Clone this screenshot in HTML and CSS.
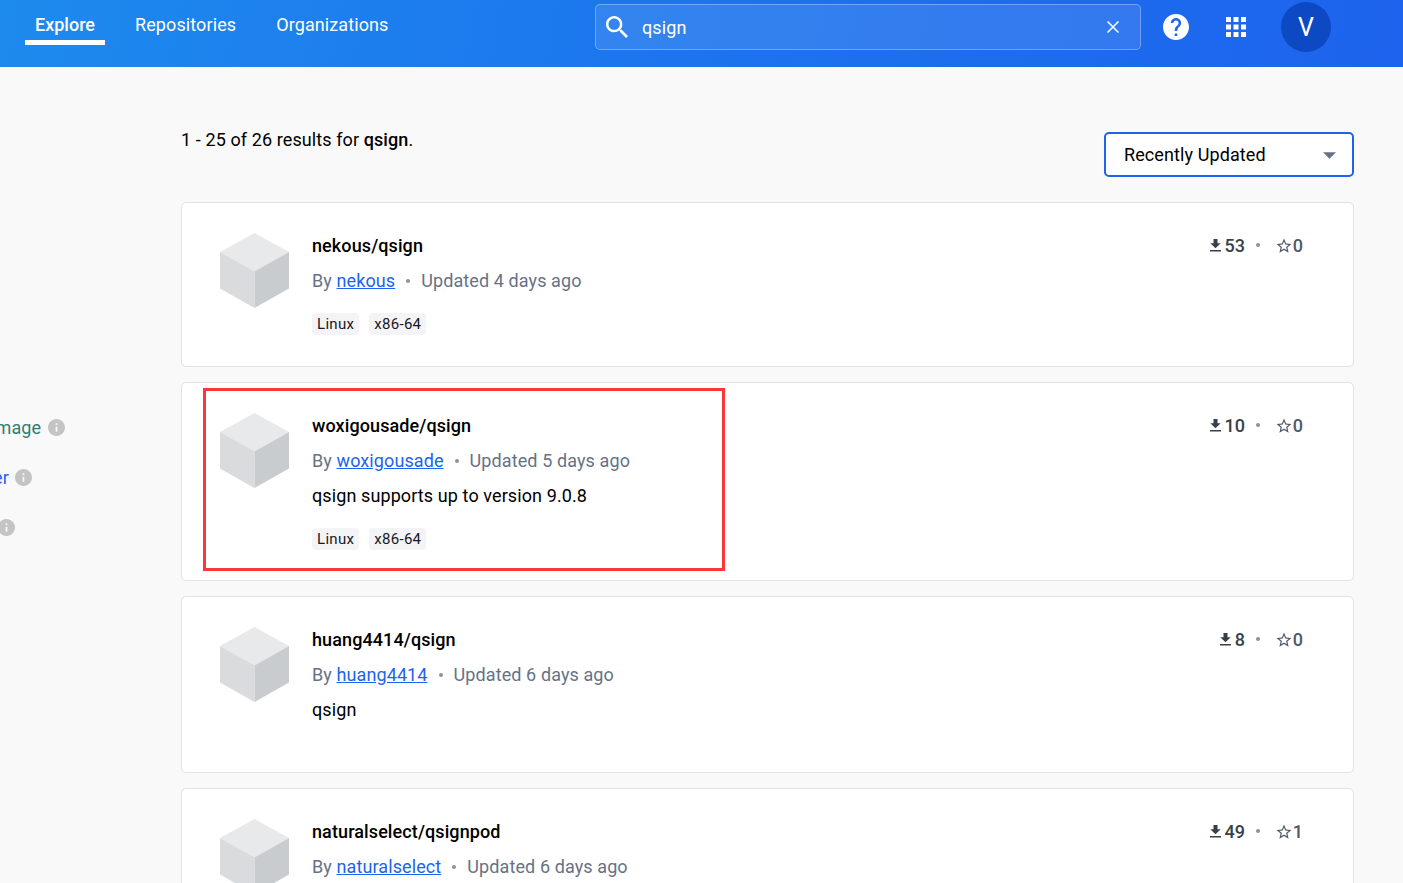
FILE: index.html
```html
<!DOCTYPE html>
<html lang="en">
<head>
<meta charset="utf-8">
<title>qsign - Explore</title>
<link rel="stylesheet" href="styles.css">
</head>
<body>
<svg width="0" height="0" class="defs">
  <symbol id="cube" viewBox="0 0 70 75" preserveAspectRatio="none"><path fill="#e8e9ea" d="M35 0 70 19 35 39 0 19z"/><path fill="#dadbdd" d="M0 19 35 38.500V75L0 55.500z"/><path fill="#c9cccf" d="M70 19 35 38.500V75L70 55.500z"/></symbol>
  <symbol id="download" viewBox="0 0 11 13"><path fill="currentColor" d="M3.500 0h4v4.200h3.200L5.500 9.200.3 4.200h3.200zM0 11h11v1.500H0z"/></symbol>
  <symbol id="star" viewBox="0 0 24 24"><path fill="currentColor" d="m22 9.240-7.190-.62L12 2 9.190 8.630 2 9.240l5.460 4.730L5.820 21 12 17.270 18.180 21l-1.630-7.030zM12 15.400l-3.760 2.270 1-4.280-3.320-2.880 4.380-.38L12 6.100l1.710 4.040 4.380.38-3.320 2.880 1 4.280z"/></symbol>
  <symbol id="info" viewBox="2 2 20 20"><path fill="currentColor" d="M12 2C6.480 2 2 6.480 2 12s4.480 10 10 10 10-4.480 10-10S17.520 2 12 2m1 15h-2v-6h2zm0-8h-2V7h2z"/></symbol>
</svg>
<header class="topbar">
  <nav class="nav">
    <a class="nav-link active">Explore</a>
    <a class="nav-link">Repositories</a>
    <a class="nav-link">Organizations</a>
  </nav>
  <div class="search">
    <svg class="search-icon" viewBox="3 3 17.500 17.500"><path fill="currentColor" d="M15.500 14h-.79l-.28-.27C15.410 12.590 16 11.110 16 9.500 16 5.910 13.090 3 9.500 3S3 5.910 3 9.500 5.910 16 9.500 16c1.610 0 3.090-.59 4.230-1.570l.27.28v.79l5 4.990L20.490 19zm-6 0C7.010 14 5 11.990 5 9.500S7.010 5 9.500 5 14 7.010 14 9.500 11.990 14 9.500 14"/></svg>
    <span class="query">qsign</span>
    <svg class="clear" viewBox="0 0 12 12"><path stroke="currentColor" stroke-width="1.500" d="M.5.5l11 11M11.500.5l-11 11"/></svg>
  </div>
  <svg class="help" viewBox="2 2 20 20"><path fill="currentColor" d="M12 2C6.480 2 2 6.480 2 12s4.480 10 10 10 10-4.480 10-10S17.520 2 12 2m1 17h-2v-2h2zm2.070-7.750-.9.920C13.450 12.900 13 13.500 13 15h-2v-.5c0-1.100.45-2.100 1.170-2.830l1.240-1.260c.37-.36.59-.86.59-1.410 0-1.100-.9-2-2-2s-2 .9-2 2H8c0-2.210 1.790-4 4-4s4 1.790 4 4c0 .88-.36 1.680-.93 2.250"/></svg>
  <svg class="apps" viewBox="4 4 16 16"><path fill="currentColor" d="M4 8h4V4H4zm6 12h4v-4h-4zm-6 0h4v-4H4zm0-6h4v-4H4zm6 0h4v-4h-4zm6-10v4h4V4zm-6 4h4V4h-4zm6 6h4v-4h-4zm0 6h4v-4h-4z"/></svg>
  <div class="avatar">V</div>
</header>
<div class="page">
  <aside class="filters">
    <div class="filter official"><span>mage</span><svg class="info"><use href="#info"/></svg></div>
    <div class="filter verified"><span>er</span><svg class="info"><use href="#info"/></svg></div>
    <div class="filter sponsored"><svg class="info"><use href="#info"/></svg></div>
  </aside>
  <main class="results">
    <div class="toolbar">
      <div class="count">1 - 25 of 26 results for <b>qsign</b>.</div>
      <div class="sort"><span>Recently Updated</span><svg class="caret" viewBox="0 0 12 6"><path fill="currentColor" d="M0 0h12L6 6z"/></svg></div>
    </div>
    <article class="card">
      <svg class="cube"><use href="#cube"/></svg>
      <div class="body">
        <div class="name">nekous/qsign</div>
        <div class="meta">By <a>nekous</a><i class="dot"></i>Updated 4 days ago</div>
        <div class="tags"><span class="tag">Linux</span><span class="tag">x86-64</span></div>
      </div>
      <div class="stats"><svg class="download"><use href="#download"/></svg>53<i class="dot"></i><svg class="star"><use href="#star"/></svg><span class="stars">0</span></div>
    </article>
    <article class="card marked">
      <svg class="cube"><use href="#cube"/></svg>
      <div class="body">
        <div class="name">woxigousade/qsign</div>
        <div class="meta">By <a>woxigousade</a><i class="dot"></i>Updated 5 days ago</div>
        <div class="desc">qsign supports up to version 9.0.8</div>
        <div class="tags"><span class="tag">Linux</span><span class="tag">x86-64</span></div>
      </div>
      <div class="stats"><svg class="download"><use href="#download"/></svg>10<i class="dot"></i><svg class="star"><use href="#star"/></svg><span class="stars">0</span></div>
    </article>
    <article class="card untagged">
      <svg class="cube"><use href="#cube"/></svg>
      <div class="body">
        <div class="name">huang4414/qsign</div>
        <div class="meta">By <a>huang4414</a><i class="dot"></i>Updated 6 days ago</div>
        <div class="desc">qsign</div>
      </div>
      <div class="stats"><svg class="download"><use href="#download"/></svg>8<i class="dot"></i><svg class="star"><use href="#star"/></svg><span class="stars">0</span></div>
    </article>
    <article class="card">
      <svg class="cube"><use href="#cube"/></svg>
      <div class="body">
        <div class="name">naturalselect/qsignpod</div>
        <div class="meta">By <a>naturalselect</a><i class="dot"></i>Updated 6 days ago</div>
      </div>
      <div class="stats"><svg class="download"><use href="#download"/></svg>49<i class="dot"></i><svg class="star"><use href="#star"/></svg><span class="stars">1</span></div>
    </article>
  </main>
</div>
</body>
</html>
```

FILE: styles.css
```css
* { box-sizing: border-box; }
body {
  margin: 0;
  height: 883px;
  overflow: hidden;
  background: #f9f9f9;
  font: 18px/35px Roboto, sans-serif;
  letter-spacing: .1px;
  color: #000;
}
svg { display: block; flex: none; }
.defs { position: absolute; }

.topbar {
  display: flex;
  height: 67px;
  padding-left: 25px;
  color: #fff;
  background: linear-gradient(100deg, #1d8aed 0%, #1c74ee 50%, #1d63ed 100%);
}
.nav { display: flex; gap: 20px; width: 570px; }
.nav-link { height: 45px; padding: 7px 10px 0; white-space: nowrap; }
.nav-link.active { width: 80px; font-weight: 500; letter-spacing: 0; border-bottom: 5px solid #fff; }
.search {
  display: flex;
  align-items: center;
  width: 546px;
  height: 46px;
  margin-top: 4px;
  padding: 0 21px 0 10px;
  border: 1px solid rgba(255, 255, 255, .3);
  border-radius: 5px;
  background: rgba(255, 255, 255, .1);
}
.search-icon { width: 22px; height: 22px; }
.query { flex: 1; padding: 0 0 0 14px; }
.clear { width: 12px; height: 12px; }
.help { width: 26px; height: 26px; margin: 14px 0 0 22px; }
.apps { width: 20px; height: 20px; margin: 17px 0 0 37px; }
.avatar {
  width: 50px;
  height: 50px;
  margin: 2px 0 0 35px;
  border-radius: 50%;
  background: #0c49c2;
  font-size: 25px;
  line-height: 52px;
  letter-spacing: 0;
  text-align: center;
}

.page { display: flex; height: 816px; overflow: hidden; }
.filters { width: 181px; padding-top: 343px; }
.filter { display: flex; align-items: center; gap: 6.5px; height: 35px; margin: 0 0 15px -4.5px; }
.filter span { margin-top: -1px; }
.verified { margin-left: -7px; }
.sponsored { margin-left: -2.5px; }
.official { color: #2e7f74; }
.verified { color: #2560ff; }
.filter .info { width: 17px; height: 17px; margin-top: -1px; color: #c4c4c4; }

.results { width: 1173px; }
.toolbar { display: flex; justify-content: space-between; height: 135px; padding-top: 65px; }
.count { height: 35px; margin-top: -10px; }
.count b { font-weight: 500; }
.sort {
  display: flex;
  align-items: center;
  justify-content: space-between;
  width: 250px;
  height: 45px;
  padding: 0 16px 0 18px;
  border: 2px solid #1d63ed;
  border-radius: 5px;
  background: #fff;
}
.sort span { margin-top: -1px; }
.caret { width: 13px; height: 7px; color: #677285; margin-top: 2px; }

.card {
  position: relative;
  display: flex;
  height: 165px;
  margin-bottom: 15px;
  padding: 25px 50px 0 38px;
  border: 1px solid #e1e2e6;
  border-radius: 5px;
  background: #fff;
}
.card.marked { height: 199px; }
.card.untagged { height: 177px; }
.card.marked::after {
  content: "";
  position: absolute;
  left: 21px;
  top: 5px;
  box-sizing: border-box;
  width: 522px;
  height: 183px;
  border: 3px solid #fb3737;
}
.cube { width: 69px; height: 75px; margin: 5px 23px 0 0; }
.body { flex: 1; }
.name { font-weight: 500; }
.meta { color: #677285; }
.meta a { color: #1d63ed; text-decoration: underline; }
.dot { display: inline-block; width: 4px; height: 4px; margin: 0 11px; border-radius: 50%; background: #8993a5; vertical-align: 4px; }
.tags { display: flex; gap: 10px; margin-top: 15px; }
.tag {
  height: 22px;
  padding: 0 5px;
  border-radius: 4px;
  background: #f4f4f6;
  color: #17191e;
  font-size: 15px;
  line-height: 22px;
  letter-spacing: .3px;
}
.stats { display: flex; align-items: center; height: 34px; color: #393f49; font-weight: 500; }
.stats .dot { margin: 0 11px 0 10.5px; }
.download { width: 11px; height: 13px; margin: 0 3.5px 0 0; }
.star { width: 18px; height: 18px; margin: 1px -.5px 0 4.5px; color: #505968; }
.stars { color: #505968; }
```
